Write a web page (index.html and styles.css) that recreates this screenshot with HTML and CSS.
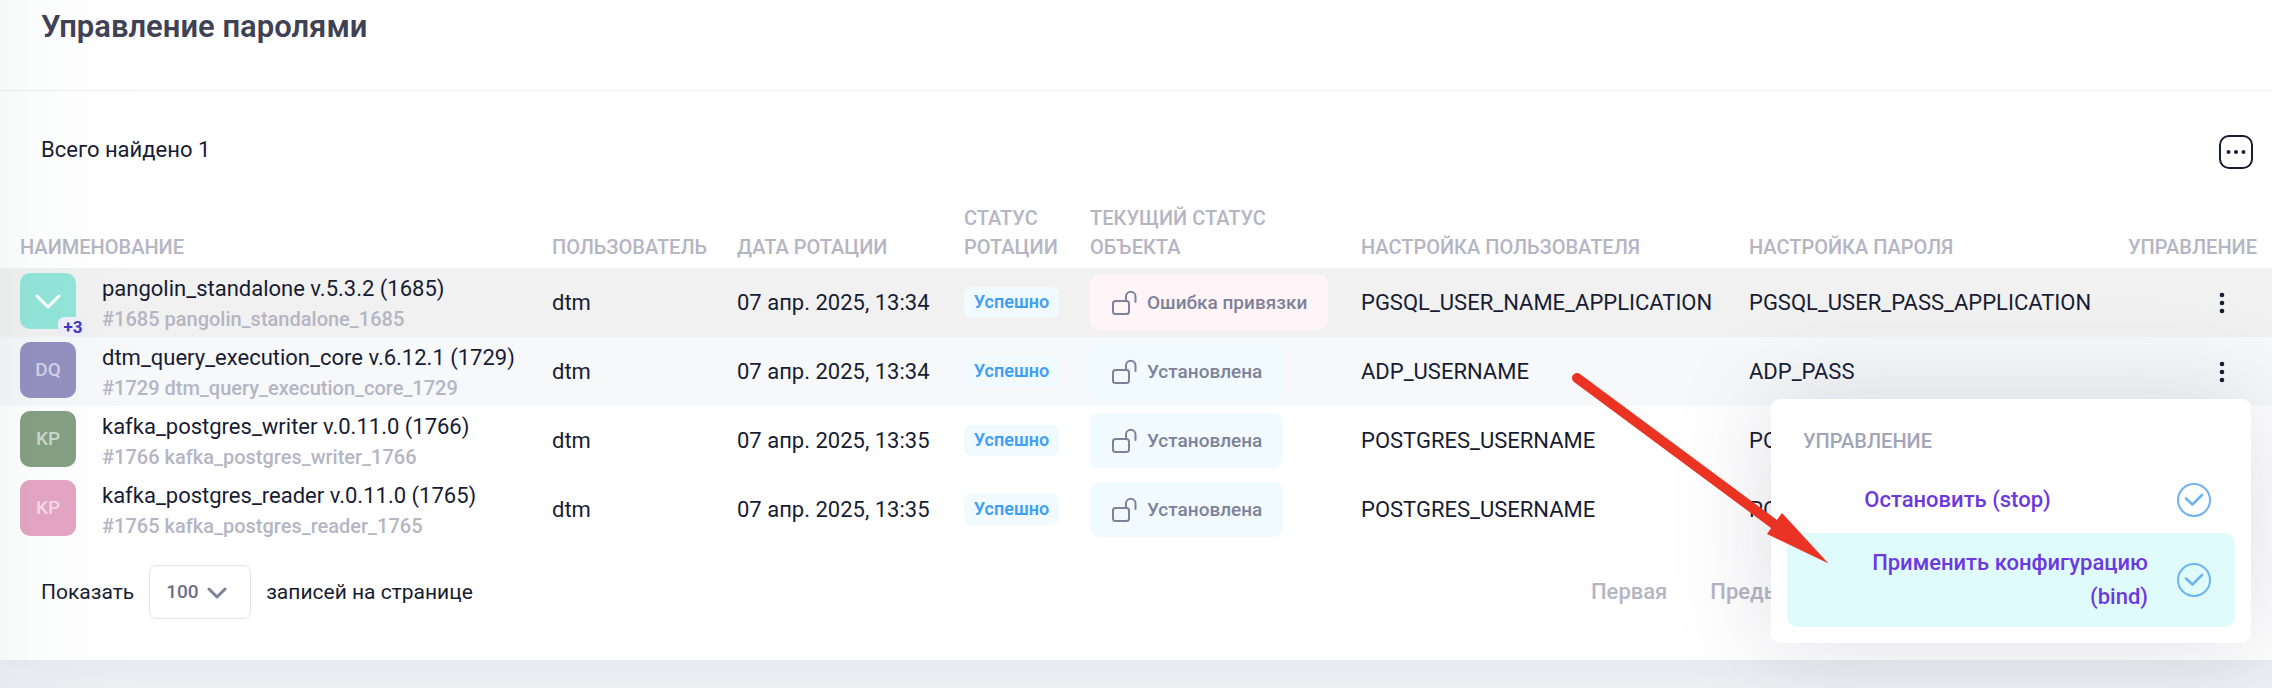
FILE: index.html
```html
<!DOCTYPE html>
<html lang="ru">
<head>
<meta charset="utf-8">
<title>Управление паролями</title>
<link rel="stylesheet" href="styles.css">
</head>
<body>
<svg class="sprite" aria-hidden="true">
  <symbol id="lock" viewBox="0 0 28 28">
    <rect x="2" y="12" width="16" height="13" rx="2.500"/>
    <path d="M15 12V7.500a4.500 4.500 0 0 1 9.500 0V13"/>
  </symbol>
  <symbol id="kebab" viewBox="0 0 34 34">
    <circle cx="17" cy="9" r="2.300"/><circle cx="17" cy="17" r="2.300"/><circle cx="17" cy="25" r="2.300"/>
  </symbol>
  <symbol id="check" viewBox="0 0 36 36">
    <circle cx="18" cy="18" r="16"/>
    <path d="M10 16.500l6.500 6L26 13" stroke-width="2.600"/>
  </symbol>
</svg>
<main class="card">
  <header class="card-header"><h1>Управление паролями</h1></header>
  <div class="toolbar">
    <span>Всего найдено 1</span>
    <button class="more" type="button" aria-label="Ещё">
      <svg viewBox="0 0 34 34"><rect x="1" y="1" width="32" height="32" rx="9"/><circle cx="9.500" cy="17" r="2"/><circle cx="17" cy="17" r="2"/><circle cx="24.500" cy="17" r="2"/></svg>
    </button>
  </div>
  <table class="grid">
    <colgroup>
      <col class="c-name"><col class="c-user"><col class="c-date"><col class="c-rotation"><col class="c-state"><col class="c-login"><col class="c-pass"><col class="c-actions">
    </colgroup>
    <thead>
      <tr><th>Наименование</th><th>Пользователь</th><th>Дата ротации</th><th>Статус ротации</th><th>Текущий статус объекта</th><th>Настройка пользователя</th><th>Настройка пароля</th><th>Управление</th></tr>
    </thead>
    <tbody>
      <tr class="row-parent">
        <td><div class="entity"><span class="avatar teal"><svg viewBox="0 0 28 28"><path d="M3 9l11 11L25 9"/></svg><span class="count">+3</span></span><div><div class="name">pangolin_standalone v.5.3.2 (1685)</div><div class="sub">#1685 pangolin_standalone_1685</div></div></div></td>
        <td>dtm</td><td>07 апр. 2025, 13:34</td><td><span class="badge">Успешно</span></td>
        <td><span class="state error"><svg><use href="#lock"/></svg>Ошибка привязки</span></td>
        <td>PGSQL_USER_NAME_APPLICATION</td><td>PGSQL_USER_PASS_APPLICATION</td>
        <td><div class="actions"><button class="kebab" type="button" aria-label="Управление"><svg><use href="#kebab"/></svg></button></div></td>
      </tr>
      <tr class="row-active">
        <td><div class="entity"><span class="avatar violet">DQ</span><div><div class="name">dtm_query_execution_core v.6.12.1 (1729)</div><div class="sub">#1729 dtm_query_execution_core_1729</div></div></div></td>
        <td>dtm</td><td>07 апр. 2025, 13:34</td><td><span class="badge">Успешно</span></td>
        <td><span class="state"><svg><use href="#lock"/></svg>Установлена</span></td>
        <td>ADP_USERNAME</td><td>ADP_PASS</td>
        <td><div class="actions"><button class="kebab" type="button" aria-label="Управление"><svg><use href="#kebab"/></svg></button>
          <div class="menu">
            <div class="menu-title">Управление</div>
            <button class="menu-item stop" type="button"><span>Остановить (stop)</span><svg><use href="#check"/></svg></button>
            <button class="menu-item bind" type="button"><span>Применить конфигурацию (bind)</span><svg><use href="#check"/></svg></button>
            <svg class="pointer" viewBox="0 0 260 196" aria-hidden="true"><path class="shaft" d="M6 7L203 153"/><path class="head" d="M257.500 192.500L211 142l-6 8-9 13z"/></svg>
          </div>
        </div></td>
      </tr>
      <tr>
        <td><div class="entity"><span class="avatar green">KP</span><div><div class="name">kafka_postgres_writer v.0.11.0 (1766)</div><div class="sub">#1766 kafka_postgres_writer_1766</div></div></div></td>
        <td>dtm</td><td>07 апр. 2025, 13:35</td><td><span class="badge">Успешно</span></td>
        <td><span class="state"><svg><use href="#lock"/></svg>Установлена</span></td>
        <td>POSTGRES_USERNAME</td><td>POSTGRES_PASS</td>
        <td><div class="actions"><button class="kebab" type="button" aria-label="Управление"><svg><use href="#kebab"/></svg></button></div></td>
      </tr>
      <tr>
        <td><div class="entity"><span class="avatar pink">KP</span><div><div class="name">kafka_postgres_reader v.0.11.0 (1765)</div><div class="sub">#1765 kafka_postgres_reader_1765</div></div></div></td>
        <td>dtm</td><td>07 апр. 2025, 13:35</td><td><span class="badge">Успешно</span></td>
        <td><span class="state"><svg><use href="#lock"/></svg>Установлена</span></td>
        <td>POSTGRES_USERNAME</td><td>POSTGRES_PASS</td>
        <td><div class="actions"><button class="kebab" type="button" aria-label="Управление"><svg><use href="#kebab"/></svg></button></div></td>
      </tr>
    </tbody>
  </table>
  <footer class="pager">
    <div class="page-size">
      <label for="size">Показать</label>
      <span class="select"><select id="size"><option>100</option></select><svg viewBox="0 0 20 20"><path d="M2 6l8 8 8-8"/></svg></span>
      <span>записей на странице</span>
    </div>
    <nav class="pages"><button type="button">Первая</button><button type="button">Предыдущая</button></nav>
  </footer>
</main>
</body>
</html>
```
FILE: styles.css
```css
* { box-sizing: border-box; }
body {
  margin: 0;
  min-height: 100vh;
  overflow: hidden;
  background: #f0f2f6;
  color: #181c32;
  font: 400 22px/32px Roboto, "Noto Sans", sans-serif;
}
body::after {
  content: "";
  position: absolute;
  inset: 0 auto 0 0;
  width: 170px;
  background: linear-gradient(90deg, rgba(50, 80, 80, .04), rgba(50, 80, 80, .02) 20%, rgba(50, 80, 80, .005) 65%, transparent);
  pointer-events: none;
}
button { border: 0; padding: 0; background: none; font: inherit; color: inherit; cursor: pointer; }
svg { fill: none; stroke: currentColor; stroke-linecap: round; stroke-linejoin: round; display: block; }
.sprite { position: absolute; width: 0; height: 0; }
.card { background: #fff; box-shadow: 0 0 60px rgba(60, 65, 105, .08); }
.card-header { height: 91px; padding: 9px 41px; border-bottom: 1px solid #f0f0f2; }
h1 { margin: 0; font-size: 31px; line-height: 36px; font-weight: 600; color: #3f4254; }
.toolbar { display: flex; justify-content: space-between; align-items: center; padding: 43px 19px 34px 41px; }
.toolbar > span { margin-bottom: 4px; }
.more { width: 34px; height: 34px; }
.more svg { width: 34px; height: 34px; stroke-width: 2; }
.more circle { fill: currentColor; stroke: none; }

.grid { width: 100%; table-layout: fixed; border-collapse: collapse; }
.c-name { width: 552px; }
.c-user { width: 185px; }
.c-date { width: 227px; }
.c-rotation { width: 126px; }
.c-state { width: 271px; }
.c-login { width: 388px; }
.c-pass { width: 379px; }
.c-actions { width: 144px; }
th {
  padding: 0 17px 6px 0;
  font-size: 20px; line-height: 29px; font-weight: 500;
  text-align: left; text-transform: uppercase; vertical-align: bottom;
  color: #b5b5c3;
}
th:first-child, td:first-child { padding-left: 20px; }
th:last-child { text-align: right; padding-left: 0; }
td { height: 69px; padding: 0; vertical-align: middle; white-space: nowrap; }
td:last-child { padding-right: 33px; }
.row-parent { background: #f1f1f1; }
.row-active { background: #f6f8fa; }
.entity { display: flex; align-items: center; gap: 26px; }
.avatar {
  position: relative;
  display: grid; place-items: center;
  width: 56px; height: 56px;
  margin-bottom: 4px;
  border-radius: 10px;
  font-size: 19px; font-weight: 500;
  color: rgba(255, 255, 255, .6);
}
.teal { background: #93e5d9; color: #fff; }
.violet { background: #9390bf; }
.green { background: #859f83; }
.pink { background: #e4a5c3; }
.avatar svg { width: 28px; height: 28px; stroke-width: 3; }
.count {
  position: absolute; left: 38px; top: 44px;
  width: 30px; height: 20px;
  border-radius: 6px;
  background: #eeeefa; color: #3f37c0;
  font-size: 17px; line-height: 20px; font-weight: 700; text-align: center;
}
.name { line-height: 32px; }
.sub { font-size: 20px; line-height: 28px; font-weight: 500; color: #b5b5c3; }
.badge {
  display: block; width: 95px; height: 31px;
  border-radius: 7px;
  background: #f1faff; color: #419ef5;
  font-size: 18px; line-height: 29px; font-weight: 600; text-align: center;
}
.state {
  display: inline-flex; align-items: center; gap: 8px;
  height: 55px; padding: 0 21px;
  border-radius: 9px;
  background: #f1faff; color: #7e8299;
  font-size: 19px; font-weight: 500;
  vertical-align: middle;
}
.state svg { width: 28px; height: 28px; stroke-width: 2; }
.error { background: #fff5f8; }
.actions { position: relative; width: 34px; height: 34px; margin-left: auto; }
.kebab svg { width: 34px; height: 34px; fill: currentColor; stroke: none; }

.menu {
  position: absolute; top: 44px; right: -12px; z-index: 2;
  width: 480px; padding: 16px;
  border-radius: 9px;
  background: #fff;
  box-shadow: 0 0 100px rgba(65, 60, 95, .18);
}
.menu-title {
  padding: 9px 16px;
  font-size: 20px; line-height: 34px; font-weight: 500;
  text-transform: uppercase; color: #a1a5b7;
}
.menu-item {
  display: flex; align-items: center; justify-content: flex-end; gap: 28px;
  width: 100%; min-height: 66px; padding: 13px 23px 13px 16px;
  border-radius: 10px;
  line-height: 34px; font-weight: 500; text-align: right; white-space: normal;
  color: #6c38e0;
}
.menu-item span { width: 300px; }
.menu-item svg { flex: none; width: 36px; height: 36px; stroke: #6db3f2; stroke-width: 2; }
.stop { gap: 64px; }
.stop span { flex: 1; text-align: center; }
.bind { background: #e0fbfc; }
.pointer { position: absolute; left: -200px; top: -28px; width: 260px; height: 196px; pointer-events: none; }
.shaft { stroke: #ea3323; stroke-width: 10; }
.head { fill: #ea3323; stroke: none; }

.pager { display: flex; align-items: center; justify-content: space-between; padding: 21px 41px 41px; }
.page-size { display: flex; align-items: center; gap: 15px; font-size: 21px; }
.select { position: relative; }
select {
  appearance: none;
  display: block; width: 102px; height: 54px; padding: 0 16px;
  border: 1px solid #e1e3ea; border-radius: 7px;
  background: #fff; color: #6b6f88;
  font: 500 19px/28px Roboto, sans-serif;
}
.select svg { position: absolute; left: 58px; top: 18px; width: 20px; height: 20px; stroke: #7e8299; stroke-width: 3; pointer-events: none; }
.pages { display: flex; gap: 43px; width: 640px; color: #b5b5c3; font-weight: 500; }
```
